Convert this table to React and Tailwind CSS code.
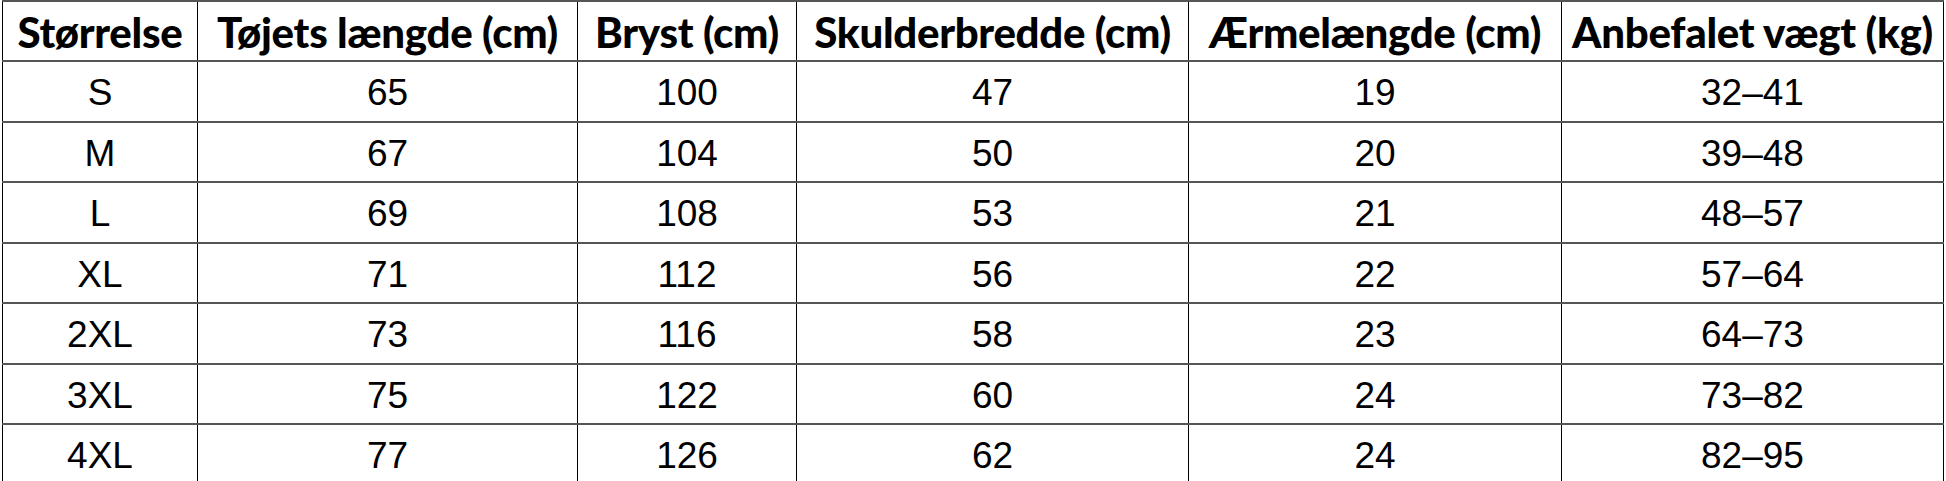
const headers = [
  "Størrelse",
  "Tøjets længde (cm)",
  "Bryst (cm)",
  "Skulderbredde (cm)",
  "Ærmelængde (cm)",
  "Anbefalet vægt (kg)",
];

const rows = [
  ["S", "65", "100", "47", "19", "32–41"],
  ["M", "67", "104", "50", "20", "39–48"],
  ["L", "69", "108", "53", "21", "48–57"],
  ["XL", "71", "112", "56", "22", "57–64"],
  ["2XL", "73", "116", "58", "23", "64–73"],
  ["3XL", "75", "122", "60", "24", "73–82"],
  ["4XL", "77", "126", "62", "24", "82–95"],
];

const widths = ["w-[195px]", "w-[380px]", "w-[219px]", "w-[392px]", "w-[373px]", "w-[382px]"];

export default function App() {
  return (
    <div className="w-[1946px] h-[481px] overflow-hidden bg-white pl-[2px] text-black">
      <table className="table-fixed border-collapse w-[1941px] font-['Liberation_Sans',Arial,sans-serif]">
        <colgroup>
          {widths.map((w, i) => (
            <col key={i} className={w} />
          ))}
        </colgroup>
        <thead>
          <tr className="h-[60px]">
            {headers.map((h) => (
              <th
                key={h}
                className="border-x border-x-black border-y-2 border-y-[#555] p-0 pt-[2px] text-center align-middle text-[42px] leading-none font-black tracking-[-0.3px] font-['Lato',sans-serif] whitespace-nowrap"
              >
                {h}
              </th>
            ))}
          </tr>
        </thead>
        <tbody>
          {rows.map((r) => (
            <tr key={r[0]} className="h-[60.5px]">
              {r.map((c, i) => (
                <td
                  key={i}
                  className="border-x border-x-black border-y-2 border-y-[#555] p-0 pt-[3px] text-center align-middle text-[37px] leading-none"
                >
                  {c}
                </td>
              ))}
            </tr>
          ))}
        </tbody>
      </table>
    </div>
  );
}
